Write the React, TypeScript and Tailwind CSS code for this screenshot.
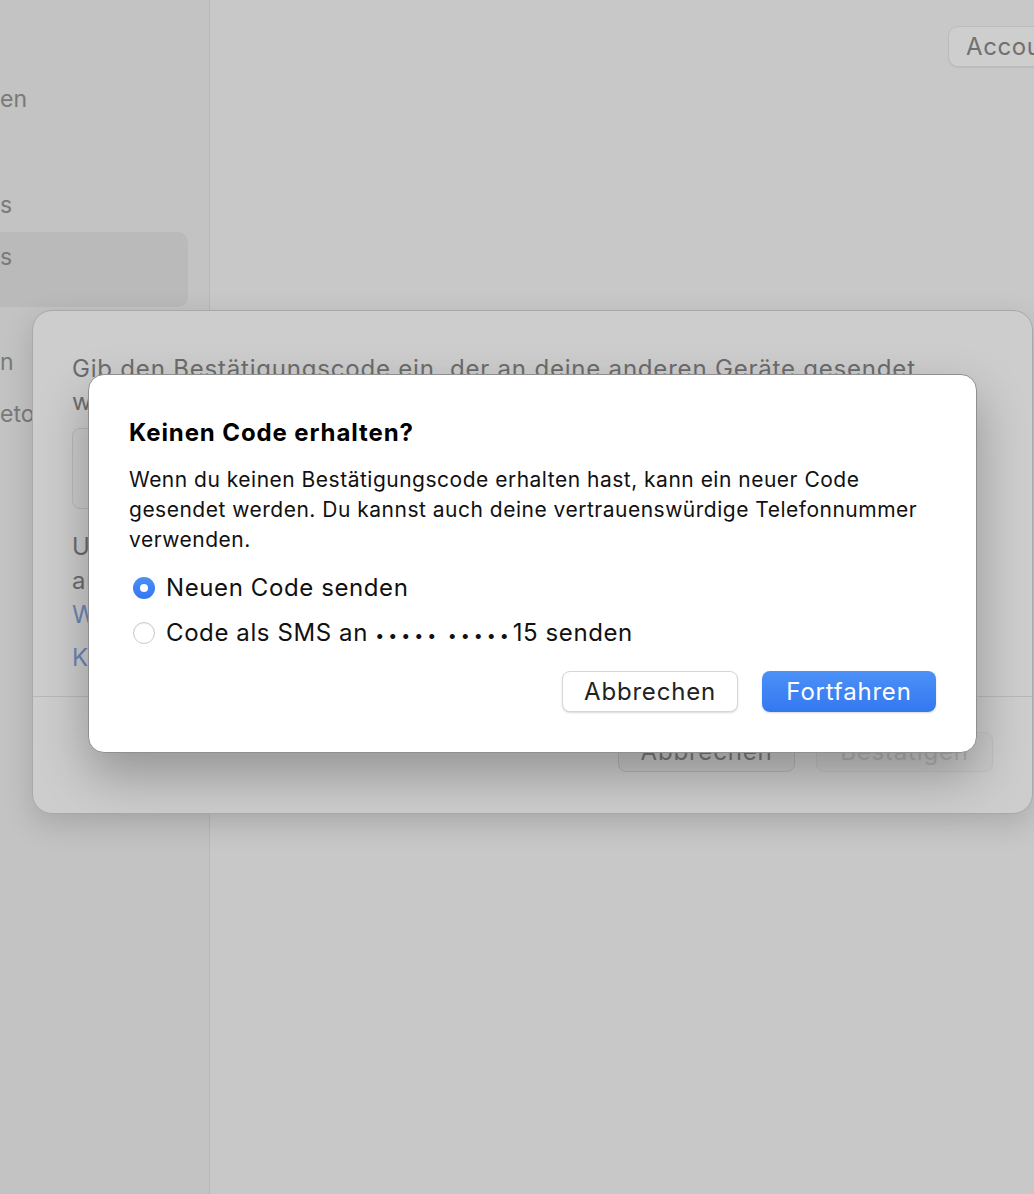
import React from "react";

const font = { fontFamily: "Inter, 'Noto Sans', 'Liberation Sans', sans-serif" };

function Radio({ checked, children }: { checked: boolean; children: React.ReactNode }) {
  return (
    <div className="flex items-center gap-[11px] h-[30px] pl-1">
      {checked ? (
        <span className="w-[22px] h-[22px] rounded-full bg-gradient-to-b from-[#4a8ff8] to-[#3477f0] flex items-center justify-center">
          <span className="w-[8px] h-[8px] rounded-full bg-white" />
        </span>
      ) : (
        <span className="w-[22px] h-[22px] rounded-full bg-white border border-[#c9c9c9] shadow-[inset_0_1px_1px_rgba(0,0,0,0.06)]" />
      )}
      <span className="text-[24px] text-[#111] tracking-[0.6px] whitespace-nowrap">{children}</span>
    </div>
  );
}

export default function App() {
  return (
    <div style={font} className="relative w-[1034px] h-[1194px] overflow-hidden bg-[#c7c8c7] flex">
      {/* Sidebar */}
      <aside className="w-[210px] shrink-0 bg-[#c2c3c2] border-r border-[#b7b8b7] text-[23px] text-[#7a7a7a]">
        <div className="h-[84px]" />
        <div className="h-[30px] flex items-center">en</div>
        <div className="h-[76px]" />
        <div className="h-[30px] flex items-center">s</div>
        <div className="h-[12px]" />
        <div className="w-[188px] h-[75px] rounded-r-[10px] bg-[#bababa] pt-[10px]">
          <div className="h-[30px] flex items-center">s</div>
        </div>
        <div className="h-[40px]" />
        <div className="h-[30px] flex items-center">n</div>
        <div className="h-[22px]" />
        <div className="h-[30px] flex items-center">eto</div>
      </aside>

      {/* Main */}
      <main className="flex-1 flex justify-end pt-[26px]">
        <div className="h-[41px] w-[100px] -mr-[14px] rounded-[10px] bg-[#cdcecd] border border-[#bcbcbc] shadow-[0_1px_1px_rgba(0,0,0,0.06)] text-[24px] tracking-[0.6px] text-[#707070] pl-[17px] flex items-center">
          Account
        </div>
      </main>

      {/* Sheet behind */}
      <div className="absolute left-[32px] top-[310px] w-[1001px] h-[504px] rounded-[20px] bg-[#cdcdcd] border border-[#a9a9a9] shadow-[0_10px_30px_rgba(0,0,0,0.15)] overflow-hidden flex flex-col">
        <div className="px-[39px] pt-[41px] flex-1 text-[24px] tracking-[0.8px] text-[#6c6c6c]">
          <div className="leading-[33px] whitespace-nowrap">
            Gib den Bestätigungscode ein, der an deine anderen Geräte gesendet
            <br />
            wurde.
          </div>
          <div className="mt-[10px] w-[880px] h-[81px] rounded-[8px] border border-[#b9b9b9] bg-[#cbcbcb]" />
          <div className="mt-[21px] leading-[34px] whitespace-nowrap">
            Unbekannter Code
            <br />
            auf dem Gerät
          </div>
          <div className="leading-[33px] text-[#6d86b6]">Weitere Optionen</div>
          <div className="mt-[10px] leading-[33px] text-[#6d86b6]">Keinen Code erhalten?</div>
        </div>
        <div className="border-t border-[#b8b8b8] h-[117px] flex justify-end items-start gap-[21px] pr-[39px] pt-[35px]">
          <div className="w-[177px] h-[40px] rounded-[8px] border border-[#b5b5b5] bg-[#c8c8c8] text-[24px] tracking-[0.8px] text-[#7a7a7a] flex items-center justify-center">
            Abbrechen
          </div>
          <div className="w-[177px] h-[40px] rounded-[8px] border border-[#c2c2c2] bg-[#cacaca] text-[24px] tracking-[0.8px] text-[#b3b3b3] flex items-center justify-center">
            Bestätigen
          </div>
        </div>
      </div>

      {/* Front dialog */}
      <div className="absolute left-[88px] top-[374px] w-[889px] h-[379px] rounded-[16px] bg-white border border-[#8f8f8f] shadow-[0_22px_50px_rgba(0,0,0,0.28)] px-[40px] pt-[44px] pb-[40px] flex flex-col">
        <h2 className="text-[24px] leading-[28px] font-bold tracking-[0.9px] text-black">Keinen Code erhalten?</h2>
        <p className="mt-[18px] text-[21px] leading-[30px] tracking-[0.5px] text-[#111] whitespace-nowrap">
          Wenn du keinen Bestätigungscode erhalten hast, kann ein neuer Code
          <br />
          gesendet werden. Du kannst auch deine vertrauenswürdige Telefonnummer
          <br />
          verwenden.
        </p>
        <div className="mt-[18px] flex flex-col gap-[15px]">
          <Radio checked>Neuen Code senden</Radio>
          <Radio checked={false}>
            Code als SMS an <span className="text-[16px] tracking-[4px]">•••••</span>{" "}
            <span className="text-[16px] tracking-[4px]">•••••</span>15 senden
          </Radio>
        </div>
        <div className="mt-auto flex justify-end gap-[24px]">
          <button className="w-[176px] h-[41px] rounded-[8px] bg-white border border-[#d7d7d7] shadow-[0_1px_2px_rgba(0,0,0,0.15)] text-[24px] tracking-[0.8px] text-[#222]">
            Abbrechen
          </button>
          <button className="w-[174px] h-[41px] rounded-[8px] bg-gradient-to-b from-[#4c90f7] to-[#3478f0] text-[24px] tracking-[0.8px] text-white shadow-[0_1px_2px_rgba(0,0,0,0.15)]">
            Fortfahren
          </button>
        </div>
      </div>
    </div>
  );
}
